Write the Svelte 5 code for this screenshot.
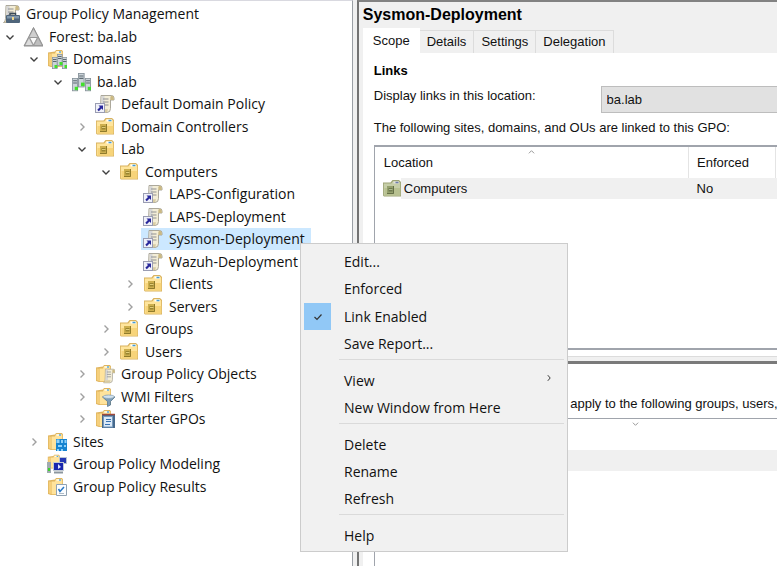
<script>
  const tree = [
    { level: -1, icon: 'root', label: 'Group Policy Management' },
    { level: 0, icon: 'forest', label: 'Forest: ba.lab', open: true },
    { level: 1, icon: 'domains', label: 'Domains', open: true },
    { level: 2, icon: 'domain', label: 'ba.lab', open: true },
    { level: 3, icon: 'link', label: 'Default Domain Policy' },
    { level: 3, icon: 'ou', label: 'Domain Controllers', open: false },
    { level: 3, icon: 'ou', label: 'Lab', open: true },
    { level: 4, icon: 'ou', label: 'Computers', open: true },
    { level: 5, icon: 'link', label: 'LAPS-Configuration' },
    { level: 5, icon: 'link', label: 'LAPS-Deployment' },
    { level: 5, icon: 'link', label: 'Sysmon-Deployment', selected: true },
    { level: 5, icon: 'link', label: 'Wazuh-Deployment' },
    { level: 5, icon: 'ou', label: 'Clients', open: false },
    { level: 5, icon: 'ou', label: 'Servers', open: false },
    { level: 4, icon: 'ou', label: 'Groups', open: false },
    { level: 4, icon: 'ou', label: 'Users', open: false },
    { level: 3, icon: 'objects', label: 'Group Policy Objects', open: false },
    { level: 3, icon: 'filters', label: 'WMI Filters', open: false },
    { level: 3, icon: 'starter', label: 'Starter GPOs', open: false },
    { level: 1, icon: 'sites', label: 'Sites', open: false },
    { level: 1, icon: 'modeling', label: 'Group Policy Modeling' },
    { level: 1, icon: 'results', label: 'Group Policy Results' }
  ];

  const menu = [
    [{ label: 'Edit...' }, { label: 'Enforced' }, { label: 'Link Enabled', checked: true }, { label: 'Save Report...' }],
    [{ label: 'View', submenu: true }, { label: 'New Window from Here' }],
    [{ label: 'Delete' }, { label: 'Rename' }, { label: 'Refresh' }],
    [{ label: 'Help' }]
  ];

  const tabs = ['Scope', 'Details', 'Settings', 'Delegation'];
  let active = $state('Scope');
</script>

{#snippet server(x, y)}
  <g transform="translate({x} {y})">
    <rect width="5.500" height="12" fill="#87929a" />
    <rect x=".7" y=".7" width="4" height="10.600" fill="#cbd3d8" />
    <path d="M1 2.500h3.500M1 4.500h3.500" stroke="#5d6971" />
    <rect x="2.500" y="8" width="3" height="3" fill="#42e02c" />
  </g>
{/snippet}

{#snippet folder()}
  <path d="M1 3.500L8 2.500L9 1h6l1 1.500V18H4l-3-1z" fill="#dfb45e" />
  <path d="M4.500 4.500H8L9 2h5.500l.8 1.500V17.300H4.500z" fill="#ffe39c" />
  <path d="M1.700 4.200l2.800.8v12l-2.800-.8z" fill="#f6cf7b" />
  <path d="M9.500 3h4.500" stroke="#fffbe8" stroke-width="1.500" />
  <path d="M12 3h2" stroke="#5ba9d9" stroke-width="1.500" />
{/snippet}

{#snippet scroll()}
  <path d="M6 1.500h10.500q2.500 0 2.500 2.500v2h-3.500v8.500q0 4-3.500 4H3.500q2-1 2-4z" fill="#f3edd6" stroke="#a39f92" stroke-width=".9" />
  <path d="M6.500 2h3v13h-3z" fill="#d7d7d7" />
  <path d="M16 1.700q-1 .8-.7 4.200h3.400V4q0-2.300-2.700-2.300z" fill="#cbb983" />
  <path d="M4 18.300q2-1 2-3h7q-.5 3.200-2 3.200z" fill="#d8cba2" />
  <path d="M8 5h5.500M8 8h5.500M8 11h5.500" stroke="#8f9093" />
{/snippet}

{#snippet icon(name)}
  <svg class="icon" viewBox="0 0 20 20" aria-hidden="true">
    {#if name === 'root'}
      {@render scroll()}
      <path d="M10 11V9.500h5.500V11" fill="none" stroke="#3a4a58" stroke-width="1.500" />
      <rect x="6" y="11" width="14" height="8" rx="1" fill="#4f657b" />
      <path d="M7 12h12v2.500H7z" fill="#8299ad" />
      <rect x="12" y="13" width="2" height="3" fill="#f0d68a" />
    {:else if name === 'forest'}
      <path d="M10.500 0.500L20 19H1z" fill="#a8a8a8" stroke="#8d8d8d" />
      <path d="M10.500 2.500L14.500 10h-8z" fill="#cfcfcf" />
      <path d="M6 11.500l3.500 6.500H2.500z" fill="#dcdcdc" />
      <path d="M15 11.500l3.500 6.500h-7z" fill="#bebebe" />
      <path d="M6.500 10.500h8l-4 7.500z" fill="#fafafa" stroke="#989898" />
    {:else if name === 'domains'}
      {@render folder()}
      {@render server(5, 8)}{@render server(15, 8)}{@render server(10, 5)}
    {:else if name === 'domain'}
      <g transform="translate(1 6) scale(1.100)">{@render server(0, 0)}</g>
      <g transform="translate(14 6) scale(1.100)">{@render server(0, 0)}</g>
      <g transform="translate(7 1) scale(1.200)">{@render server(0, 0)}</g>
    {:else if name === 'link'}
      {@render scroll()}
      <rect x="0.500" y="9.500" width="9" height="9" fill="#f0f1f9" stroke="#9a9db2" />
      <path d="M3.500 11.500h4.500v4.500l-1.500-1.500-2.700 2.700-1.500-1.500L5 13z" fill="#29289b" />
    {:else if name === 'ou' || name === 'ou-muted'}
      <g class:muted={name === 'ou-muted'}>
        <path d="M1 3.500h7.500L10.500 1H17l2 2v14.500H2L1 16.500z" fill="#d9b25f" />
        <path d="M1.800 4.500h7.500L11.300 2h5.200l1.700 1.700V16.500H1.800z" fill="#ffe59c" />
        <path d="M2.500 9h15.700v7.500H2.500z" fill="#f7d47a" />
        <path d="M11.500 3.500h5.500" stroke="#fff" stroke-width="2" />
        <path d="M13.500 3.500h3" stroke="#429bd8" stroke-width="1.500" />
        <rect x="5" y="7" width="7" height="8" fill="#cdaf4e" />
        <path d="M5 14.500h6.500V7" fill="none" stroke="#8f7b2c" />
        <rect x="6.500" y="9" width="4" height="3.500" fill="#9a8530" />
        <path d="M7 10.500h3.500" stroke="#e2cd78" />
      </g>
    {:else if name === 'objects'}
      {@render folder()}
      <g transform="translate(6 4) scale(.74 .8)">{@render scroll()}</g>
    {:else if name === 'filters'}
      {@render folder()}
      <path d="M7.500 10q6-3 12.500 0L15.500 14.500v3.500l-3 1.500v-5z" fill="#7c9db8" stroke="#5b7a92" stroke-width=".8" />
      <ellipse cx="13.700" cy="9.700" rx="5.700" ry="1.700" fill="#d3e3ef" stroke="#7a94a8" stroke-width=".6" />
    {:else if name === 'starter'}
      {@render folder()}
      <rect x="7" y="5" width="13" height="14" fill="#46698c" />
      <rect x="8.500" y="7.500" width="9" height="10.500" fill="#dbe9f7" stroke="#7799bc" />
      <path d="M7 5.500h13" stroke="#a0493c" stroke-width="1.500" />
      <path d="M11 10.500h5M11 12.500h5M10 15.500h5" stroke="#3872b2" />
    {:else if name === 'sites'}
      {@render folder()}
      <path d="M9 7h11v12H9z" fill="#1684d0" />
      <path d="M9.500 11V7.500h3V11zM14 8h2v3h-2zM17.500 8h2v3h-2zM11 13h4v2h-4zM10 17h2v2h-2zM14 17h2v2h-2zM17 13h2v2h-2z" fill="#8fd1fa" />
    {:else if name === 'modeling'}
      <g transform="scale(.8)">{@render folder()}</g>
      <rect x="12" y="3" width="8" height="7" fill="#b9c5d2" />
      <rect x="13" y="4" width="6" height="5" fill="#2438b4" />
      <rect x="0" y="8" width="4" height="11" fill="#a1abb0" />
      <rect x="1" y="14" width="2" height="3" fill="#3ad22b" />
      <rect x="6" y="8" width="11" height="9" fill="#c2cad4" />
      <rect x="7" y="9" width="9" height="7" fill="#1826ae" />
      <path d="M11 10l3 3-3 2z" fill="#dbe2ff" />
      <path d="M7 18.500h9" stroke="#8c969e" stroke-width="2" />
    {:else if name === 'results'}
      {@render folder()}
      <path d="M9.500 7.500h10v11h-10z" fill="#fbfdff" stroke="#90a2b2" />
      <path d="M11.500 12l1.500 2.500L17 10" fill="none" stroke="#2777c6" stroke-width="1.500" />
      <path d="M12 16.500h5" stroke="#aebbc6" />
    {/if}
  </svg>
{/snippet}

<main>
  <nav aria-label="Console tree">
    <ul>
      {#each tree as node}
        <li style:--level={node.level} class:root={node.level < 0}>
          {#if node.level >= 0}
            {#if node.open !== undefined}
              <button class="toggle" class:open={node.open} aria-label="Toggle {node.label}" aria-expanded={node.open}>
                <svg viewBox="0 0 10 10" aria-hidden="true"><path d={node.open ? 'M1.500 3.500L5 7l3.500-3.500' : 'M3.500 1.500L7 5L3.500 8.500'} /></svg>
              </button>
            {:else}
              <span class="toggle"></span>
            {/if}
          {/if}
          <button class="node" class:selected={node.selected}>{@render icon(node.icon)}<span>{node.label}</span></button>
        </li>
      {/each}
    </ul>
  </nav>

  <section class="details">
    <h1>Sysmon-Deployment</h1>
    <div class="tabs" role="tablist">
      {#each tabs as tab}
        <button role="tab" class:active={tab === active} aria-selected={tab === active} onclick={() => (active = tab)}>{tab}</button>
      {/each}
    </div>
    <div class="scope">
      <div class="pane links">
        <h2>Links</h2>
        <div class="field">
          <label for="location">Display links in this location:</label>
          <select id="location"><option>ba.lab</option></select>
        </div>
        <p>The following sites, domains, and OUs are linked to this GPO:</p>
        <div class="list">
          <svg class="sort" viewBox="0 0 8 4" aria-hidden="true"><path d="M1 3.500L4 .5l3 3" /></svg>
          <table>
            <thead><tr><th class="wide">Location</th><th>Enforced</th><th></th></tr></thead>
            <tbody><tr><td class="wide"><div>{@render icon('ou-muted')}<span>Computers</span></div></td><td>No</td><td></td></tr></tbody>
          </table>
        </div>
      </div>
      <div class="splitter"></div>
      <div class="pane filtering">
        <h2>Security Filtering</h2>
        <p>The settings in this GPO can only apply to the following groups, users, and computers:</p>
        <div class="list">
          <svg class="sort second" viewBox="0 0 8 4" aria-hidden="true"><path d="M1 .5l3 3 3-3" /></svg>
          <div class="band"></div>
        </div>
      </div>
    </div>
  </section>

  <div class="menu" role="menu">
    {#each menu as group}
      <div class="group">
        {#each group as item}
          <button role={item.checked ? 'menuitemcheckbox' : 'menuitem'} aria-checked={item.checked}>
            <span class="mark" class:checked={item.checked}>
              {#if item.checked}<svg viewBox="0 0 10 10" aria-hidden="true"><path d="M1.500 5L4 7.500L8.500 2.500" /></svg>{/if}
            </span>
            <span class="text">{item.label}</span>
            {#if item.submenu}<svg class="more" viewBox="0 0 10 10" aria-hidden="true"><path d="M3.500 1.500L6.500 5L3.500 8.500" /></svg>{/if}
          </button>
        {/each}
      </div>
    {/each}
  </div>
</main>

<style>
  :global(body) { overflow: hidden; }
  main {
    position: relative;
    display: flex;
    height: 100vh;
    background: #f0f0f0;
    color: #111;
    font: 13px/20px 'Liberation Sans', Arial, sans-serif;
  }
  button {
    font: inherit;
    color: inherit;
    background: none;
    border: 0;
    padding: 0;
    text-align: left;
    white-space: nowrap;
  }
  svg { flex: none; }
  h1, h2, p, ul { margin: 0; padding: 0; }
  nav, .menu { font: 14px/20px 'Open Sans', 'Noto Sans', sans-serif; }

  nav {
    flex: 0 0 45.400%;
    box-sizing: border-box;
    overflow: hidden;
    background: #fff;
    border-top: 1px solid #d9d9e0;
    border-right: 1px solid #9a9fa5;
    padding-top: 2px;
  }
  li {
    display: flex;
    height: 22px;
    padding-left: calc(var(--level) * 24px);
  }
  li:nth-child(even) { height: 23px; }
  .root { padding-left: 0; }
  .toggle {
    box-sizing: border-box;
    display: flex;
    align-items: center;
    justify-content: center;
    width: 21px;
    padding-right: 2px;
  }
  .toggle svg { width: 10px; height: 10px; }
  .toggle path { fill: none; stroke: #a0a0a0; stroke-width: 1.400; }
  .toggle.open path { stroke: #404040; }
  .node {
    display: flex;
    align-items: center;
    gap: 6px;
    padding: 0 6px 0 2px;
  }
  .root .node { padding-left: 0; }
  .node.selected { background: #cce8ff; }
  .icon { width: 20px; height: 20px; }

  .details {
    flex: 1;
    min-width: 0;
    display: flex;
    flex-direction: column;
    margin-left: 4px;
    border-left: 2px solid #737373;
    border-top: 2px solid #828282;
    padding-left: 4px;
    overflow: hidden;
  }
  h1 { font-size: 16px; line-height: 26px; color: #000; }
  .tabs { display: flex; align-items: flex-end; height: 25px; }
  .tabs button {
    height: 23px;
    padding: 0 7px;
    border: 1px solid #dcdcdc;
    border-left: 0;
    border-bottom: 0;
  }
  .tabs button.active {
    height: 25px;
    padding: 0 10px;
    border: 0;
    background: #fff;
  }
  .scope { flex: 1; display: flex; flex-direction: column; background: #fff; min-height: 0; }
  .pane { padding-left: 11px; }
  h2 { font-size: 13px; line-height: 20px; color: #000; }
  p { line-height: 20px; white-space: nowrap; }
  .links { padding-top: 8px; padding-bottom: 6px; }
  .field { display: flex; gap: 65px; height: 37px; }
  .field label { padding-top: 5px; white-space: nowrap; }
  select {
    appearance: none;
    flex: 1;
    height: 27px;
    margin-top: 5px;
    padding: 0 5px;
    border: 1px solid #bdbdbd;
    border-right: 0;
    border-radius: 0;
    background: #e1e1e1;
    color: #111;
    font: inherit;
  }
  .list { position: relative; border: 2px solid #a0a4ac; border-right: 0; border-left-width: 1px; }
  .links .list { height: 201px; margin-top: 7px; }
  .sort {
    position: absolute;
    left: 38%;
    top: 3px;
    width: 7px;
    height: 4px;
    fill: none;
    stroke: #8b8b8b;
  }
  .second { left: 64%; }
  table { width: 100%; border-collapse: collapse; table-layout: fixed; }
  th, td { font-weight: 400; text-align: left; padding: 0 0 0 8px; }
  th { height: 31px; width: 78px; border-right: 1px solid #e4e4e4; }
  th.wide { width: auto; padding-left: 9px; }
  th:last-child { width: 1px; padding: 0; border: 0; }
  td { height: 21px; background: #f0f0f0; }
  td:last-child { padding: 0; }
  td.wide { padding-left: 7px; background: linear-gradient(to right, #fff 26px, #f0f0f0 26px); }
  td div { display: flex; align-items: center; gap: 2px; }
  .muted { filter: hue-rotate(25deg) saturate(.5) brightness(.88); }
  .splitter {
    height: 4px;
    border-top: 1px solid #dcdcdc;
    border-bottom: 3px solid #7a7a7a;
    background: #f0f0f0;
  }
  .filtering { flex: 1; display: flex; flex-direction: column; padding-top: 8px; }
  .filtering p { margin-top: 2px; }
  .filtering .list { flex: 1; margin-top: 4px; border-bottom: 0; border-top-width: 1px; }
  .band { margin-top: 31px; height: 21px; background: #f0f0f0; }

  .menu {
    position: absolute;
    left: 300px;
    top: 243px;
    width: 268px;
    box-sizing: border-box;
    padding: 4px 3px 2px;
    border: 1px solid #ccc;
    background: #f1f1f1;
  }
  .group + .group::before {
    content: '';
    display: block;
    height: 7px;
    margin-left: 35px;
    margin-top: 1px;
    border-top: 1px solid #dadada;
  }
  .group button { display: flex; align-items: center; width: 100%; height: 27px; }
  .group button:nth-child(even) { height: 28px; }
  .group:nth-child(3) button:nth-child(2) { height: 27px; }
  .group:nth-child(3) button:nth-child(3) { height: 28px; }
  .mark {
    display: flex;
    align-items: center;
    justify-content: center;
    width: 27px;
    height: 27px;
    margin-right: 13px;
  }
  .mark.checked { background: #91c8f6; }
  .mark svg, .more { width: 10px; height: 10px; fill: none; stroke: #333; stroke-width: 1.200; }
  .text { flex: 1; }
  .more { width: 8px; height: 8px; margin: 0 11px 6px 0; }
</style>
